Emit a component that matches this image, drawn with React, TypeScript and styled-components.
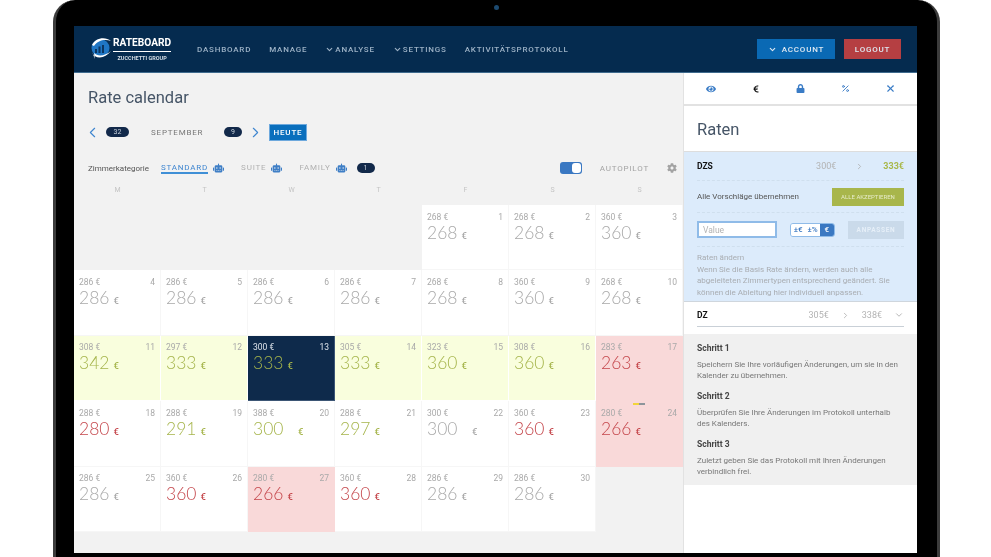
import React from "react";
import styled, { createGlobalStyle } from "styled-components";
import { FaRobot, FaCog, FaEye, FaLock, FaEuroSign } from "react-icons/fa";
import { ChevronDown, ChevronLeft, ChevronRight, Percent, X } from "lucide-react";

type Tone = "plain" | "good" | "bad" | "active";
type Ink = "grey" | "olive" | "red";

type Day = {
  day: number;
  base: number;
  rate: number;
  tone?: Tone;
  ink?: Ink;
  wide?: boolean;
  marker?: boolean;
};

const days: Day[] = [
  { day: 1, base: 268, rate: 268 },
  { day: 2, base: 268, rate: 268 },
  { day: 3, base: 360, rate: 360 },
  { day: 4, base: 286, rate: 286 },
  { day: 5, base: 286, rate: 286 },
  { day: 6, base: 286, rate: 286 },
  { day: 7, base: 286, rate: 286 },
  { day: 8, base: 268, rate: 268 },
  { day: 9, base: 360, rate: 360 },
  { day: 10, base: 268, rate: 268 },
  { day: 11, base: 308, rate: 342, tone: "good", ink: "olive" },
  { day: 12, base: 297, rate: 333, tone: "good", ink: "olive" },
  { day: 13, base: 300, rate: 333, tone: "active", ink: "olive" },
  { day: 14, base: 305, rate: 333, tone: "good", ink: "olive" },
  { day: 15, base: 323, rate: 360, tone: "good", ink: "olive" },
  { day: 16, base: 308, rate: 360, tone: "good", ink: "olive" },
  { day: 17, base: 283, rate: 263, tone: "bad", ink: "red" },
  { day: 18, base: 288, rate: 280, ink: "red" },
  { day: 19, base: 288, rate: 291, ink: "olive" },
  { day: 20, base: 388, rate: 300, ink: "olive", wide: true },
  { day: 21, base: 288, rate: 297, ink: "olive" },
  { day: 22, base: 300, rate: 300, wide: true },
  { day: 23, base: 360, rate: 360, ink: "red" },
  { day: 24, base: 280, rate: 266, tone: "bad", ink: "red", marker: true },
  { day: 25, base: 286, rate: 286 },
  { day: 26, base: 360, rate: 360, ink: "red" },
  { day: 27, base: 280, rate: 266, tone: "bad", ink: "red" },
  { day: 28, base: 360, rate: 360, ink: "red" },
  { day: 29, base: 286, rate: 286 },
  { day: 30, base: 286, rate: 286 },
];

const weekdays = ["M", "T", "W", "T", "F", "S", "S"];
const navItems = [
  { label: "DASHBOARD" },
  { label: "MANAGE" },
  { label: "ANALYSE", menu: true },
  { label: "SETTINGS", menu: true },
  { label: "AKTIVITÄTSPROTOKOLL" },
];
const steps = [
  {
    title: "Schritt 1",
    text: "Speichern Sie Ihre vorläufigen Änderungen, um sie in den Kalender zu übernehmen.",
  },
  {
    title: "Schritt 2",
    text: "Überprüfen Sie Ihre Änderungen im Protokoll unterhalb des Kalenders.",
  },
  {
    title: "Schritt 3",
    text: "Zuletzt geben Sie das Protokoll mit Ihren Änderungen verbindlich frei.",
  },
];

const toneColors: Record<Tone, string> = {
  plain: "#ffffff",
  good: "#f9fedd",
  bad: "#f9d9d9",
  active: "#0e2a4b",
};
const toneBorders: Record<Tone, string> = {
  plain: "#f6f6f6",
  good: "#ffffff",
  bad: "#f9d9d9",
  active: "#3d5675",
};
const inkColors: Record<Ink, string> = {
  grey: "#a9a9a9",
  olive: "#a6b54c",
  red: "#c5474c",
};

const Logo = () => (
  <LogoWrap>
    <svg width="23" height="24" viewBox="0 0 23 24" aria-hidden="true">
      <circle cx="10.500" cy="11" r="9" fill="#1f76c4" />
      <path d="M6 16v-4M9.500 16V9.500M13 16v-8" stroke="#0b3560" strokeWidth="2" />
      <path d="M2 8 C5 1 15 -1 21 4 C15 2 8 3 4 9 Z" fill="#ffffff" />
      <path d="M2 15 C5 23 15 22 21 14 C15 19 8 20 4 16 L5 22 Z" fill="#ffffff" />
    </svg>
    <LogoText>
      <LogoName>RATEBOARD</LogoName>
      <LogoGroup>ZUCCHETTI GROUP</LogoGroup>
    </LogoText>
  </LogoWrap>
);

const App = () => {
  return (
    <>
      <GlobalStyle />
      <Page>
        <Device>
          <Camera />
          <Screen>
            <Header>
              <Logo />
              <Nav>
                {navItems.map((item) => (
                  <NavItem key={item.label}>
                    {item.menu && <ChevronDown size={9} strokeWidth={3} />}
                    {item.label}
                  </NavItem>
                ))}
              </Nav>
              <AccountButton>
                <ChevronDown size={9} strokeWidth={3} />
                ACCOUNT
              </AccountButton>
              <LogoutButton>LOGOUT</LogoutButton>
            </Header>
            <Body>
              <Main>
                <Title>Rate calendar</Title>
                <MonthRow>
                  <ArrowLeft size={17} strokeWidth={1.6} />
                  <Pill>32</Pill>
                  <Month>SEPTEMBER</Month>
                  <Pill $narrow>9</Pill>
                  <ArrowRight size={17} strokeWidth={1.6} />
                  <TodayButton>HEUTE</TodayButton>
                </MonthRow>
                <FilterRow>
                  <FilterLabel>Zimmerkategorie</FilterLabel>
                  <RoomGroup>
                    <RoomTab $active>STANDARD</RoomTab>
                    <RoomIcon />
                  </RoomGroup>
                  <RoomGroup>
                    <RoomTab>SUITE</RoomTab>
                    <RoomIcon />
                  </RoomGroup>
                  <RoomGroup>
                    <RoomTab>FAMILY</RoomTab>
                    <RoomIcon />
                    <Pill $narrow>1</Pill>
                  </RoomGroup>
                  <FilterEnd>
                    <Toggle />
                    <AutopilotLabel>AUTOPILOT</AutopilotLabel>
                    <FaCog size={10} color="#a3a3a3" />
                  </FilterEnd>
                </FilterRow>
                <Weekdays>
                  {weekdays.map((day, index) => (
                    <span key={index}>{day}</span>
                  ))}
                </Weekdays>
                <Calendar>
                  {days.map((item) => (
                    <Cell
                      key={item.day}
                      $tone={item.tone || "plain"}
                      style={item.day === 1 ? { gridColumnStart: 5 } : undefined}
                    >
                      {item.marker && <Marker />}
                      <CellTop $active={item.tone === "active"}>
                        <span>{item.base} €</span>
                        <span>{item.day}</span>
                      </CellTop>
                      <Rate $ink={item.ink || "grey"}>
                        <RateValue $wide={item.wide}>{item.rate}</RateValue>
                        <RateUnit>€</RateUnit>
                      </Rate>
                    </Cell>
                  ))}
                </Calendar>
              </Main>
              <Side>
                <IconBar>
                  <FaEye size={10} color="#3a7cc6" />
                  <FaEuroSign size={8} color="#111111" />
                  <FaLock size={9} color="#3a7cc6" />
                  <Percent size={9} color="#3a7cc6" strokeWidth={2.4} />
                  <X size={11} color="#3a7cc6" strokeWidth={2.4} />
                </IconBar>
                <SideTitle>Raten</SideTitle>
                <BluePanel>
                  <RoomRow $main>
                    <RoomCode>DZS</RoomCode>
                    <RoomBase>300€</RoomBase>
                    <ChevronRight size={9} color="#a9a9a9" />
                    <RoomNew>333€</RoomNew>
                  </RoomRow>
                  <AcceptRow>
                    <span>Alle Vorschläge übernehmen</span>
                    <AcceptButton>ALLE AKZEPTIEREN</AcceptButton>
                  </AcceptRow>
                  <ValueRow>
                    <ValueInput placeholder="Value" />
                    <Segments>
                      <Segment>±€</Segment>
                      <Segment>±%</Segment>
                      <Segment $active>€</Segment>
                    </Segments>
                    <ApplyButton>ANPASSEN</ApplyButton>
                  </ValueRow>
                  <Hint>
                    Raten ändern
                    <br />
                    Wenn Sie die Basis Rate ändern, werden auch alle abgeleiteten
                    Zimmertypen entsprechend geändert. Sie können die Ableitung
                    hier individuell anpassen.
                  </Hint>
                </BluePanel>
                <RoomBlock>
                  <RoomRow>
                    <RoomCode>DZ</RoomCode>
                    <RoomBase>305€</RoomBase>
                    <ChevronRight size={9} color="#a9a9a9" />
                    <RoomBase>338€</RoomBase>
                    <ChevronDown size={10} color="#a9a9a9" />
                  </RoomRow>
                </RoomBlock>
                <StepsPanel>
                  {steps.map((step) => (
                    <Step key={step.title}>
                      <StepTitle>{step.title}</StepTitle>
                      <StepText>{step.text}</StepText>
                    </Step>
                  ))}
                </StepsPanel>
              </Side>
            </Body>
          </Screen>
        </Device>
      </Page>
    </>
  );
};

const GlobalStyle = createGlobalStyle`
  html, body {
    margin: 0;
    padding: 0;
    background: #ffffff;
    font-family: "Roboto", "Liberation Sans", sans-serif;
  }
  * {
    box-sizing: border-box;
  }
`;

const Page = styled.div`
  width: 991px;
  height: 557px;
  overflow: hidden;
  padding-left: 53px;
`;

const Device = styled.div`
  position: relative;
  width: 887px;
  height: 557px;
  padding: 26px 20px 4px 18px;
  background: #000000;
  border-left: 3px solid #3c3c3c;
  border-right: 3px solid #3c3c3c;
  border-radius: 22px 22px 0 0;
`;

const Camera = styled.div`
  position: absolute;
  top: 5px;
  left: 438px;
  width: 5px;
  height: 5px;
  border-radius: 50%;
  background: #1c4a70;
`;

const Screen = styled.div`
  display: flex;
  flex-direction: column;
  height: 527px;
  overflow: hidden;
  background: #f2f2f2;
  filter: blur(0.35px);
`;

const Header = styled.header`
  display: flex;
  align-items: center;
  flex: none;
  height: 47px;
  padding: 0 16px 0 16px;
  background: #052b4f;
  border-bottom: 1px solid #3f6b8e;
`;

const LogoWrap = styled.div`
  display: flex;
  align-items: center;
  width: 107px;
`;

const LogoText = styled.div`
  display: flex;
  flex-direction: column;
  align-items: center;
`;

const LogoName = styled.div`
  padding-bottom: 2px;
  border-bottom: 1px solid #ffffff;
  color: #ffffff;
  font-size: 10.200px;
  font-weight: 700;
  line-height: 12px;
`;

const LogoGroup = styled.div`
  margin-top: 3px;
  color: #d5dee6;
  font-size: 5.500px;
  font-weight: 700;
  line-height: 7px;
`;

const Nav = styled.nav`
  display: flex;
  align-items: center;
  flex: 1;
  gap: 18px;
`;

const NavItem = styled.span`
  display: flex;
  align-items: center;
  gap: 1px;
  color: #9db2c6;
  font-size: 8px;
  font-weight: 500;
  letter-spacing: 0.8px;
`;

const HeaderButton = styled.button`
  display: flex;
  align-items: center;
  justify-content: center;
  height: 20px;
  padding: 0;
  border: none;
  color: #dfe9f2;
  font-family: inherit;
  font-size: 8px;
  font-weight: 500;
  letter-spacing: 0.8px;
`;

const AccountButton = styled(HeaderButton)`
  gap: 5px;
  width: 78px;
  background: #0a69b4;
`;

const LogoutButton = styled(HeaderButton)`
  width: 57px;
  margin-left: 9px;
  background: #b53f42;
`;

const Body = styled.div`
  display: flex;
  flex: 1;
  min-height: 0;
`;

const Main = styled.main`
  width: 609px;
  flex: none;
  background: #f2f2f2;
`;

const Title = styled.h1`
  margin: 15px 0 0 14px;
  color: #465567;
  font-size: 16.500px;
  font-weight: 400;
  line-height: 20px;
`;

const MonthRow = styled.div`
  display: flex;
  align-items: center;
  height: 16px;
  margin: 16px 0 0 10px;
`;

const ArrowLeft = styled(ChevronLeft)`
  color: #3f86d0;
`;

const ArrowRight = styled(ChevronRight)`
  margin-left: 5px;
  color: #3f86d0;
`;

const Pill = styled.span<{ $narrow?: boolean }>`
  display: inline-flex;
  align-items: center;
  justify-content: center;
  width: ${(props) => (props.$narrow ? "18px" : "23px")};
  height: 10px;
  margin-left: 5px;
  border-radius: 5px;
  background: #12294a;
  color: #c8d2dc;
  font-size: 7px;
`;

const Month = styled.span`
  width: 90px;
  padding-left: 22px;
  color: #777777;
  font-size: 8px;
  letter-spacing: 0.8px;
`;

const TodayButton = styled.button`
  width: 38px;
  height: 17px;
  margin-left: 5px;
  padding: 0;
  border: 1px solid #6ea9dd;
  background: #0a6fbd;
  color: #ffffff;
  font-family: inherit;
  font-size: 8px;
  font-weight: 500;
  letter-spacing: 0.8px;
`;

const FilterRow = styled.div`
  display: flex;
  align-items: center;
  height: 14px;
  margin: 21px 0 0 14px;
`;

const FilterLabel = styled.span`
  width: 73px;
  color: #555555;
  font-size: 8px;
`;

const RoomGroup = styled.div`
  display: flex;
  align-items: center;
  gap: 5px;
  margin-right: 17px;
`;

const RoomTab = styled.span<{ $active?: boolean }>`
  border-bottom: 2px solid ${(props) => (props.$active ? "#3f8fd6" : "transparent")};
  color: ${(props) => (props.$active ? "#3f86d0" : "#b0b0b0")};
  font-size: 8px;
  letter-spacing: 0.8px;
`;

const RoomIcon = styled(FaRobot)`
  width: 11px;
  height: 10px;
  color: #3f7fc6;
`;

const FilterEnd = styled.div`
  display: flex;
  align-items: center;
  margin-left: auto;
  padding-right: 6px;
`;

const Toggle = styled.div`
  position: relative;
  width: 22px;
  height: 12px;
  border-radius: 3px;
  background: #3a78c2;

  &::after {
    content: "";
    position: absolute;
    top: 1px;
    right: 1px;
    width: 9px;
    height: 10px;
    border-radius: 3px;
    background: #ffffff;
  }
`;

const AutopilotLabel = styled.span`
  margin: 0 18px;
  color: #a3a3a3;
  font-size: 8px;
  letter-spacing: 0.8px;
`;

const Weekdays = styled.div`
  display: grid;
  grid-template-columns: repeat(7, 87px);
  height: 30px;
  padding-top: 11px;
  color: #c4c4c4;
  font-size: 7px;
  text-align: center;
`;

const Calendar = styled.div`
  display: grid;
  grid-template-columns: repeat(7, 87px);
  grid-auto-rows: 65.400px;
`;

const Cell = styled.div<{ $tone: Tone }>`
  position: relative;
  padding: 6.500px 5px 0 5px;
  background: ${(props) => toneColors[props.$tone]};
  border-right: 1px solid ${(props) => toneBorders[props.$tone]};
  border-bottom: 1px solid ${(props) => toneBorders[props.$tone]};
`;

const Marker = styled.div`
  position: absolute;
  top: 2px;
  left: 37px;
  width: 12px;
  height: 2px;
  background: linear-gradient(90deg, #f2d33a 50%, #8d959b 50%);
`;

const CellTop = styled.div<{ $active?: boolean }>`
  display: flex;
  justify-content: space-between;
  color: ${(props) => (props.$active ? "#dfe5ec" : "#a9a9a9")};
  font-size: 8.500px;
  line-height: 10px;
`;

const Rate = styled.div<{ $ink: Ink }>`
  display: flex;
  align-items: baseline;
  color: ${(props) => inkColors[props.$ink]};
`;

const RateValue = styled.span<{ $wide?: boolean }>`
  display: inline-block;
  min-width: ${(props) => (props.$wide ? "41px" : "0")};
  font-family: "Lato", sans-serif;
  font-size: 17.500px;
  font-weight: 300;
  line-height: 21px;
`;

const RateUnit = styled.span`
  margin-left: 4px;
  font-size: 9.500px;
  font-weight: 500;
`;

const Side = styled.aside`
  display: flex;
  flex-direction: column;
  flex: 1;
  background: #ffffff;
  border-left: 1px solid #e2e2e2;
`;

const IconBar = styled.div`
  display: grid;
  grid-template-columns: repeat(5, 45px);
  justify-items: center;
  align-items: center;
  height: 33px;
  padding-left: 4px;
  border-bottom: 2px solid #e2e2e2;
`;

const SideTitle = styled.h2`
  height: 46px;
  margin: 0;
  padding: 14px 0 0 13px;
  border-bottom: 1px solid #dddddd;
  color: #465567;
  font-size: 16.500px;
  font-weight: 400;
  line-height: 20px;
`;

const BluePanel = styled.section`
  height: 150px;
  padding: 0 13px 0 13px;
  background: #dcebfb;
  border-bottom: 1px solid #cfd6dd;
`;

const RoomRow = styled.div<{ $main?: boolean }>`
  display: flex;
  align-items: center;
  gap: ${(props) => (props.$main ? "19px" : "12px")};
  height: ${(props) => (props.$main ? "29px" : "25px")};
  padding-top: ${(props) => (props.$main ? "0" : "2px")};
  border-bottom: 1px ${(props) => (props.$main ? "dashed #cfdfee" : "solid #c9d0d7")};
`;

const RoomCode = styled.span`
  margin-right: auto;
  color: #111111;
  font-size: 8.500px;
  font-weight: 700;
`;

const RoomBase = styled.span`
  color: #b3b3b3;
  font-size: 9px;
`;

const RoomNew = styled.span`
  color: #a9b84a;
  font-size: 9px;
  font-weight: 700;
`;

const AcceptRow = styled.div`
  display: flex;
  align-items: center;
  justify-content: space-between;
  height: 32px;
  border-bottom: 1px dashed #cfdfee;
  color: #555555;
  font-size: 8px;
`;

const AcceptButton = styled.button`
  width: 72px;
  height: 18px;
  padding: 0;
  border: none;
  background: #a8b64b;
  color: #e6ebc8;
  font-family: inherit;
  font-size: 6px;
`;

const ValueRow = styled.div`
  display: flex;
  align-items: center;
  height: 34px;
  border-bottom: 1px dashed #cfdfee;
`;

const ValueInput = styled.input`
  width: 80px;
  height: 17px;
  padding: 0 4px;
  border: 2px solid #8fbbe8;
  background: #ffffff;
  font-family: inherit;
  font-size: 8.500px;

  &::placeholder {
    color: #b3b3b3;
  }
`;

const Segments = styled.div`
  display: flex;
  width: 45px;
  height: 14px;
  margin-left: 13px;
  overflow: hidden;
  border: 1px solid #8fbbe8;
  border-radius: 3px;
`;

const Segment = styled.span<{ $active?: boolean }>`
  display: flex;
  flex: 1;
  align-items: center;
  justify-content: center;
  background: ${(props) => (props.$active ? "#3a78c2" : "#ffffff")};
  color: ${(props) => (props.$active ? "#ffffff" : "#3a78c2")};
  font-size: 8px;
  font-weight: 500;
`;

const ApplyButton = styled.button`
  width: 56px;
  height: 18px;
  margin-left: auto;
  padding: 0;
  border: none;
  background: #cadaea;
  color: #e6eff8;
  font-family: inherit;
  font-size: 6.500px;
  font-weight: 700;
  letter-spacing: 0.7px;
`;

const Hint = styled.p`
  margin: 5px 0 0;
  color: #a9adb2;
  font-size: 8px;
  line-height: 11.500px;
`;

const RoomBlock = styled.div`
  height: 32px;
  padding: 0 13px 0 13px;
  background: #ffffff;
`;

const StepsPanel = styled.section`
  height: 151px;
  padding: 9px 13px 0 13px;
  background: #f0f0f0;
`;

const Step = styled.div`
  margin-bottom: 10px;
`;

const StepTitle = styled.div`
  margin-bottom: 5px;
  color: #444444;
  font-size: 8.500px;
  font-weight: 700;
  line-height: 11px;
`;

const StepText = styled.div`
  color: #777777;
  font-size: 8px;
  line-height: 11px;
`;

export default App;
